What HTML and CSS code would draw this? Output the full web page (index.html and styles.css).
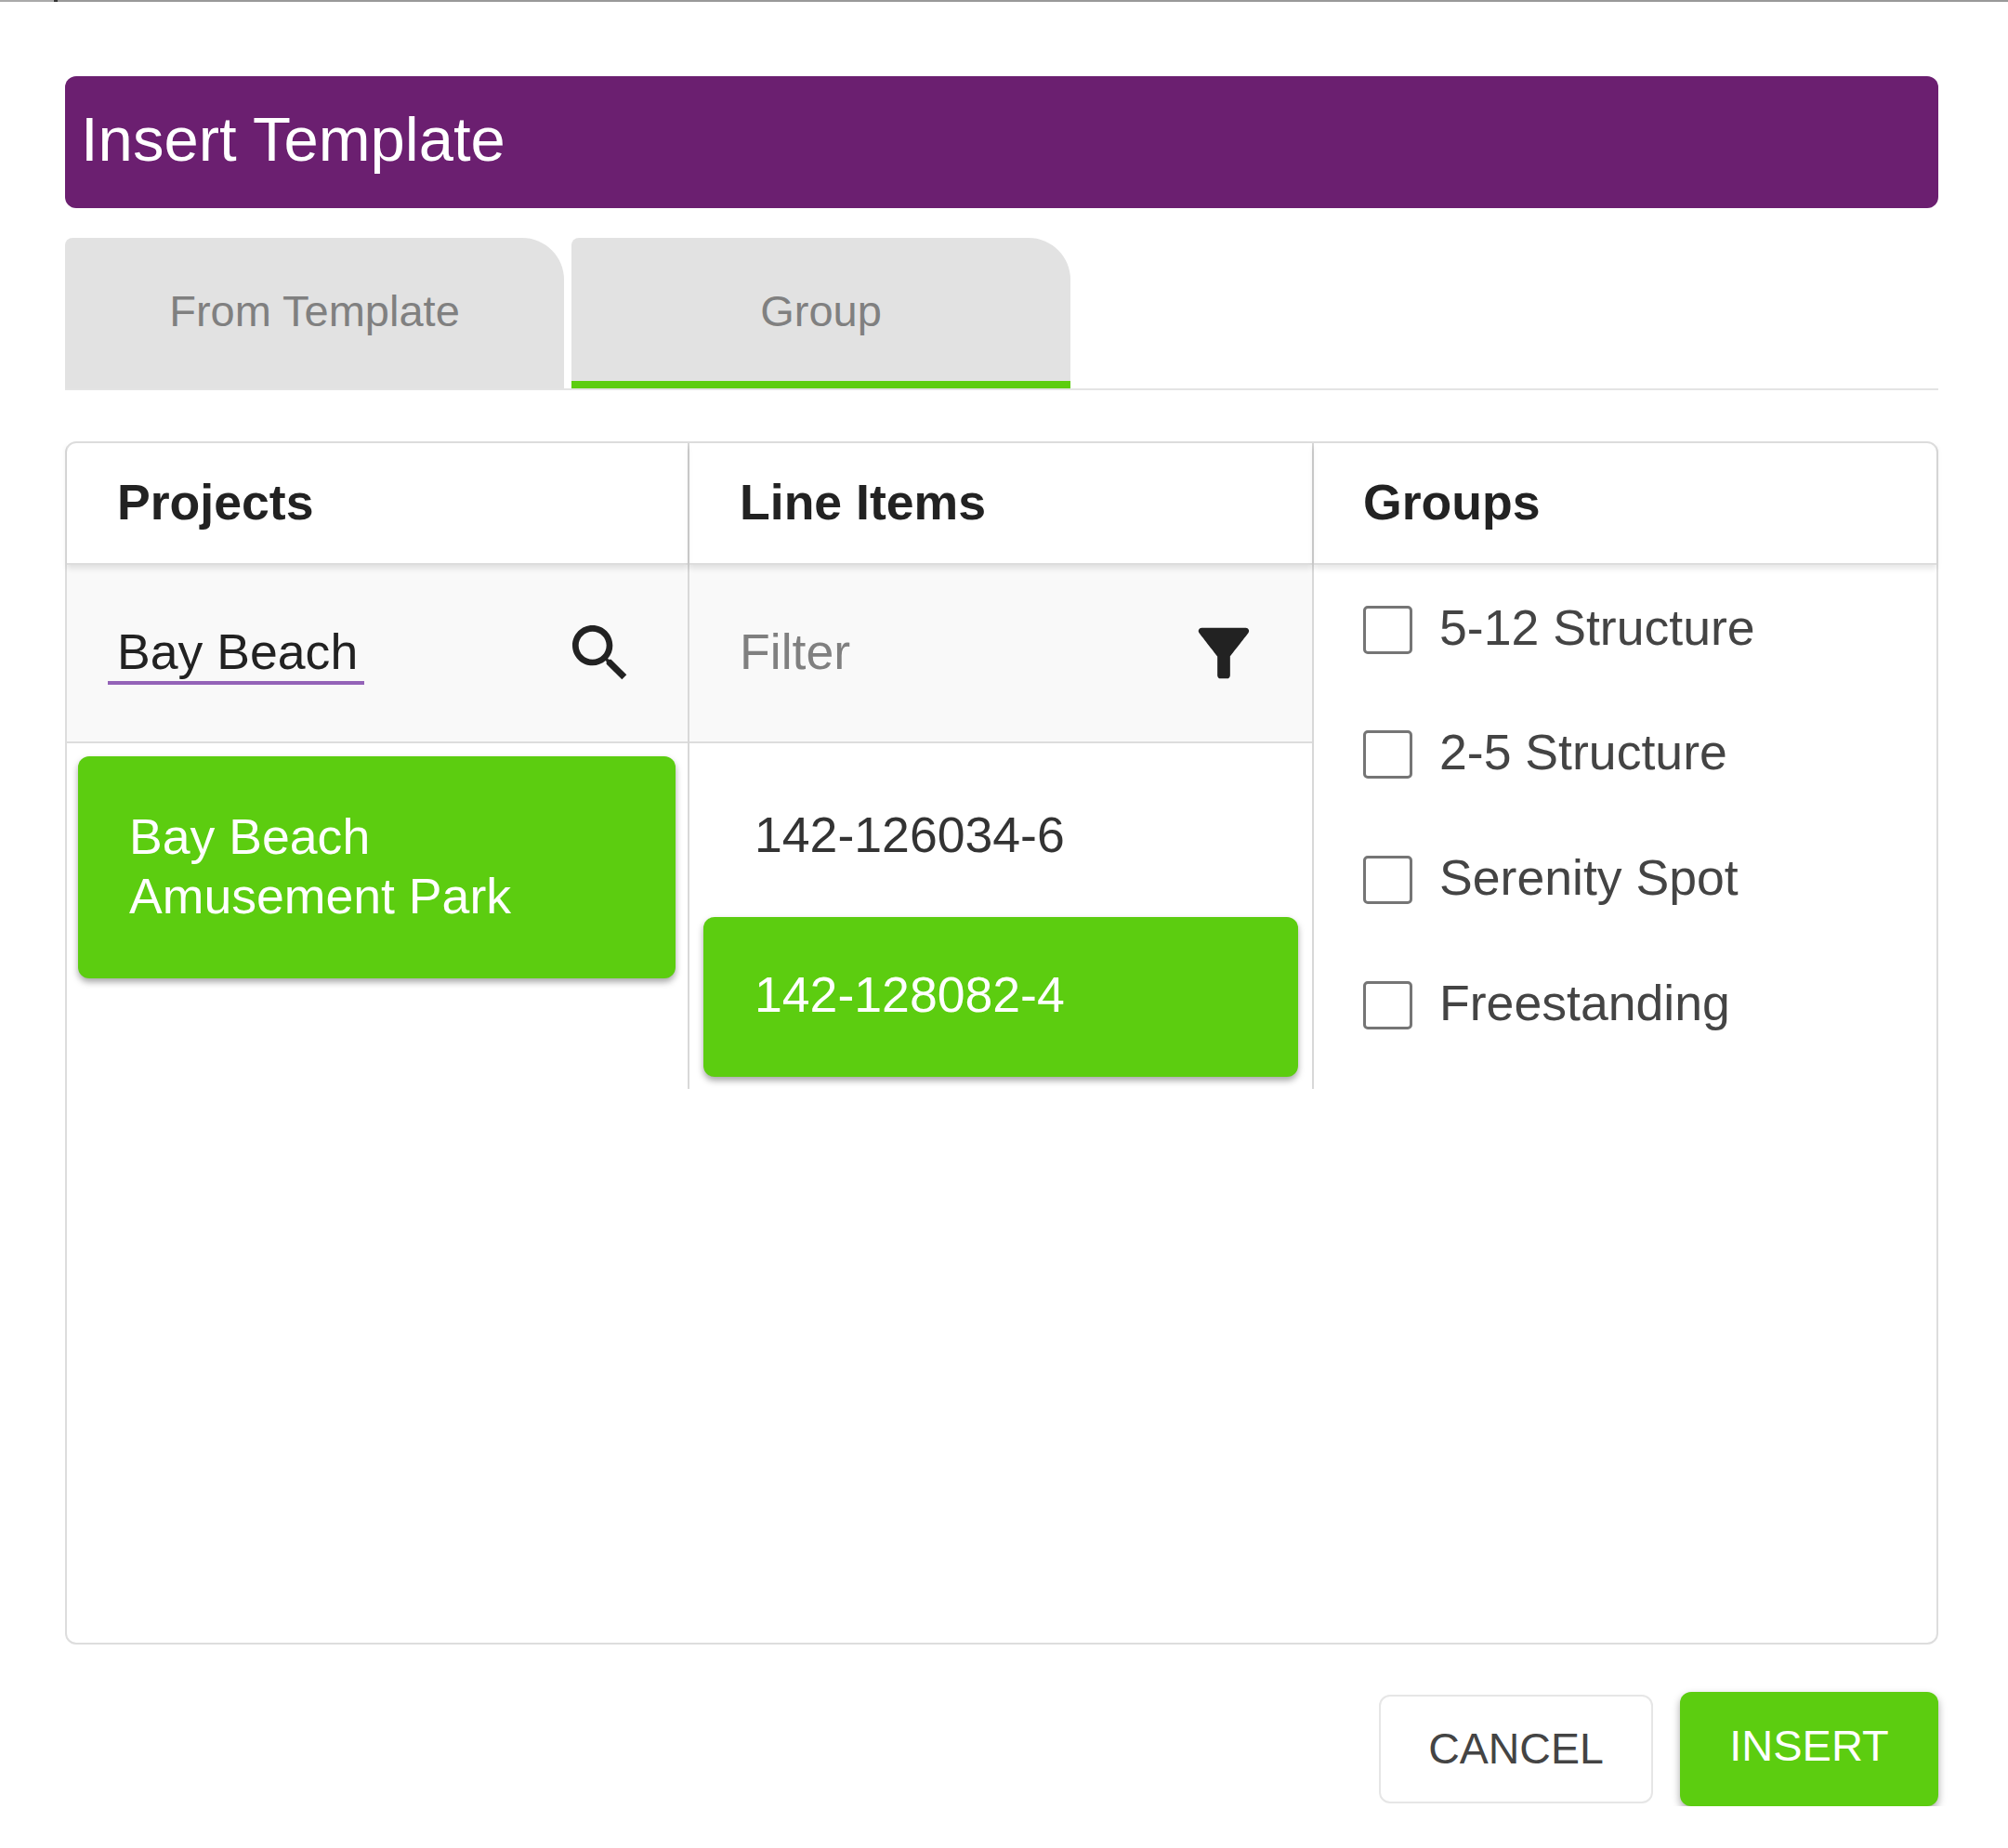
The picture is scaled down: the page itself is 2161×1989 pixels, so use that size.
FILE: index.html
```html
<!DOCTYPE html>
<html lang="en">
<head>
    <meta charset="UTF-8">
    <title>Insert Template</title>
    <link rel="stylesheet" href="styles.css">
</head>
<body>
    <div class="topline"></div>

    <div class="dialog">
        <h1 class="dialog-title">Insert Template</h1>

        <div class="tabs">
            <div class="tab">From Template</div>
            <div class="tab active">Group</div>
        </div>

        <div class="panel">
            <div class="col">
                <div class="col-head">Projects</div>
                <div class="filter-row">
                    <input class="filter-input search" type="text" value="Bay Beach">
                    <svg class="icon search-icon" viewBox="0 0 24 24"><path d="M15.5 14h-.79l-.28-.27C15.41 12.59 16 11.11 16 9.5 16 5.91 13.09 3 9.5 3S3 5.91 3 9.5 5.91 16 9.5 16c1.61 0 3.09-.59 4.23-1.57l.27.28v.79l5 4.99L20.49 19l-4.99-5zm-6 0C7.01 14 5 11.99 5 9.5S7.01 5 9.5 5 14 7.01 14 9.5 11.99 14 9.5 14z"/></svg>
                </div>
                <div class="list">
                    <div class="item selected project">Bay Beach<br>Amusement Park</div>
                </div>
            </div>

            <div class="col">
                <div class="col-head">Line Items</div>
                <div class="filter-row">
                    <input class="filter-input" type="text" placeholder="Filter">
                    <svg class="icon filter-icon" viewBox="0 0 24 24"><path d="M4.25 5.61C6.27 8.2 10 13 10 13v6c0 .55.45 1 1 1h2c.55 0 1-.45 1-1v-6s3.72-4.8 5.74-7.39c.51-.66.04-1.61-.79-1.61H5.04c-.83 0-1.3.95-.79 1.61z"/></svg>
                </div>
                <div class="list lines">
                    <div class="item">142-126034-6</div>
                    <div class="item selected">142-128082-4</div>
                </div>
            </div>

            <div class="col last">
                <div class="col-head">Groups</div>
                <div class="groups">
                    <label class="group"><input type="checkbox"><span>5-12 Structure</span></label>
                    <label class="group"><input type="checkbox"><span>2-5 Structure</span></label>
                    <label class="group"><input type="checkbox"><span>Serenity Spot</span></label>
                    <label class="group"><input type="checkbox"><span>Freestanding</span></label>
                </div>
            </div>
        </div>

        <div class="actions">
            <button type="button" class="btn cancel">CANCEL</button>
            <button type="button" class="btn insert">INSERT</button>
        </div>
    </div>
</body>
</html>
```

FILE: styles.css
```css
* {
    box-sizing: border-box;
}
body {
    margin: 0;
    background-color: #fff;
    color: #333;
    font-family: "Liberation Sans", Arial, sans-serif;
    font-size: 53.6px;
}
.topline {
    height: 2px;
    background: linear-gradient(90deg, #aaa 58px, #333 58px, #333 62px, #999 62px);
}
.dialog {
    padding: 80px 75px 0 70px;
}
.dialog-title {
    margin: 0;
    height: 142px;
    padding: 0 17px 8px;
    display: flex;
    align-items: center;
    background-color: #6b1f70;
    border-radius: 12px;
    color: #fff;
    font-size: 67px;
    font-weight: normal;
}

/* tabs */
.tabs {
    display: flex;
    gap: 8px;
    margin-top: 32px;
    border-bottom: 2px solid #e4e4e4;
}
.tab {
    width: 537px;
    height: 162px;
    padding-bottom: 6px;
    display: flex;
    align-items: center;
    justify-content: center;
    background-color: #e2e2e2;
    border-radius: 8px 45px 0 0;
    color: #808080;
    font-size: 47px;
}
.tab.active {
    box-shadow: inset 0 -8px 0 #5ccd10;
}

/* three columns */
.panel {
    display: grid;
    grid-template-columns: 670px 672px 1fr;
    align-items: start;
    height: 1295px;
    margin-top: 55px;
    border: 2px solid #ddd;
    border-radius: 12px;
}
.col {
    border-right: 2px solid #d8d8d8;
    height: 695px;
}
.col.last {
    border-right: none;
}
.col-head {
    position: relative;
    height: 131px;
    padding: 0 0 3px 54px;
    display: flex;
    align-items: center;
    border-bottom: 2px solid #ddd;
    box-shadow: 0 4px 6px rgba(0, 0, 0, 0.1);
    color: #222;
    font-weight: bold;
}
.col.last .col-head {
    padding-left: 53px;
}
.filter-row {
    height: 192px;
    display: flex;
    align-items: center;
    justify-content: space-between;
    padding: 0 54px 0 44px;
    background-color: #f9f9f9;
    border-bottom: 2px solid #ddd;
}
.filter-input {
    width: 276px;
    height: 68px;
    padding: 0 0 0 10px;
    background: transparent;
    border: none;
    border-bottom: 4px solid transparent;
    outline: none;
    color: #222;
    font-family: inherit;
    font-size: 53.6px;
}
.filter-input.search {
    border-bottom-color: #9463b8;
}
.filter-input::placeholder {
    color: #808080;
    opacity: 1;
}
.icon {
    width: 80px;
    height: 80px;
    fill: #222;
}
.filter-icon {
    width: 82px;
    height: 82px;
}

/* lists */
.list {
    padding: 14px 13px 0 12px;
}
.lines {
    padding: 14px 15px 0;
}
.item {
    height: 173px;
    padding: 0 0 6px 55px;
    display: flex;
    align-items: center;
    line-height: 64px;
}
.item.selected {
    background-color: #5ccd10;
    border-radius: 12px;
    box-shadow: 0 4px 7px rgba(0, 0, 0, 0.35);
    color: #fff;
}
.item.project {
    display: block;
    height: 239px;
    padding: 54px 0 0 55px;
}
.lines .item.selected {
    height: 172px;
}

/* groups */
.groups {
    display: flex;
    flex-direction: column;
    gap: 81.7px;
    padding: 43px 0 0 53px;
}
.group {
    display: flex;
    align-items: center;
    gap: 29px;
    height: 53px;
    color: #444;
}
.group span {
    margin-bottom: 6px;
}
.group input {
    appearance: none;
    width: 53px;
    height: 52px;
    margin: 0;
    background: #fff;
    border: 3px solid #757575;
    border-radius: 5px;
}

/* footer buttons */
.actions {
    display: flex;
    justify-content: flex-end;
    align-items: center;
    gap: 29px;
    margin-top: 51px;
}
.btn {
    font-family: inherit;
    font-size: 47px;
    border-radius: 12px;
}
.cancel {
    width: 295px;
    height: 117px;
    padding-bottom: 3px;
    background-color: #fff;
    border: 2px solid #e6e6e6;
    color: #444;
    font-size: 46.5px;
}
.insert {
    width: 278px;
    height: 123px;
    padding-bottom: 9px;
    background-color: #5ccd10;
    border: none;
    box-shadow: 0 4px 9px rgba(0, 0, 0, 0.35);
    color: #fff;
}
```
